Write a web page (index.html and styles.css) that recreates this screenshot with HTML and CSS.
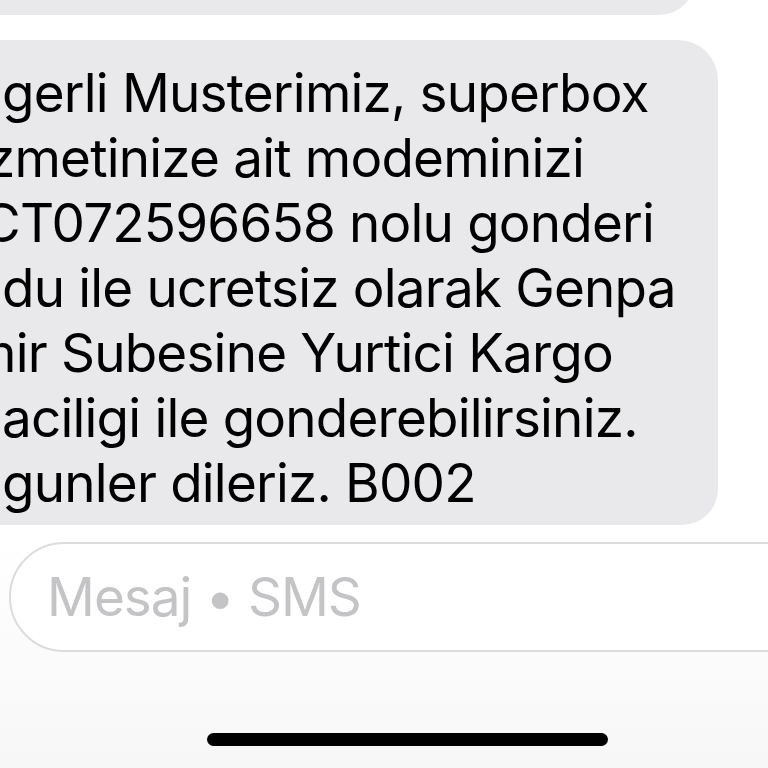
FILE: index.html
```html
<!DOCTYPE html>
<html lang="tr">
<head>
    <meta charset="UTF-8">
    <meta name="viewport" content="width=device-width, initial-scale=1.0">
    <title>Mesajlar</title>
    <link rel="stylesheet" href="styles.css">
</head>
<body>

    <div class="screen">
        <div class="bubble bubble-prev"></div>

        <div class="bubble bubble-main">
            <div class="line">gerli Musterimiz, superbox</div>
            <div class="line cut-z">zmetinize ait modeminizi</div>
            <div class="line cut-c">CT072596658 nolu gonderi</div>
            <div class="line">du ile ucretsiz olarak Genpa</div>
            <div class="line cut-m">mir Subesine Yurtici Kargo</div>
            <div class="line">aciligi ile gonderebilirsiniz.</div>
            <div class="line">gunler dileriz. B002</div>
        </div>

        <div class="composer">
            <span class="placeholder">Mesaj • SMS</span>
        </div>

        <div class="home-bar"></div>
    </div>

</body>
</html>
```

FILE: styles.css
```css
body {
    margin: 0;
    background: #ffffff;
    font-family: Inter, "Noto Sans", sans-serif;
    overflow: hidden;
}
.screen {
    width: 768px;
    height: 768px;
    overflow: hidden;
    display: flex;
    flex-direction: column;
    background: linear-gradient(#ffffff 70%, #f7f7f7);
}
.bubble {
    background-color: #e9e9eb;
    flex-shrink: 0;
}
.bubble-prev {
    width: 695px;
    height: 60px;
    margin-top: -45px;
    border-radius: 0 0 36px 0;
}
.bubble-main {
    width: 718px;
    height: 485px;
    box-sizing: border-box;
    margin-top: 25px;
    padding: 21px 0 0 2px;
    border-radius: 0 40px 36px 0;
    overflow: hidden;
}
.line {
    font-size: 53px;
    line-height: 65px;
    letter-spacing: -0.8px;
    color: #000000;
    white-space: nowrap;
}
.cut-z {
    text-indent: -16px;
}
.cut-c {
    text-indent: -20px;
}
.cut-m {
    text-indent: -32px;
}
.composer {
    flex-shrink: 0;
    width: 820px;
    height: 110px;
    box-sizing: border-box;
    margin: 17px 0 0 9px;
    border: 2px solid #dcdcde;
    border-radius: 55px;
    background: #ffffff;
    display: flex;
    align-items: center;
    padding-left: 36px;
}
.placeholder {
    font-size: 53px;
    letter-spacing: -1px;
    color: #c4c4c6;
}
.home-bar {
    flex-shrink: 0;
    width: 401px;
    height: 13px;
    margin: 81px 0 0 207px;
    background: #000000;
    border-radius: 7px;
}
```
